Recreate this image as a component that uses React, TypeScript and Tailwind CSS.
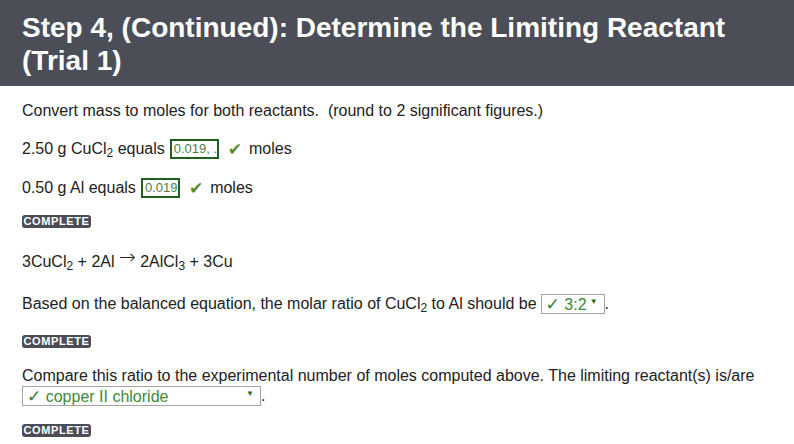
export default function App() {
  return (
    <div className="w-[794px] h-[444px] overflow-hidden bg-white font-['Liberation_Sans',Arial,sans-serif] text-[#222]">
      <div className="bg-[#4b4e57] h-[86px] px-[22px] pt-[11px] border-b border-[#53565e]">
        <h1 className="text-[28px] leading-[33px] font-bold text-white">
          Step 4, (Continued): Determine the Limiting Reactant (Trial 1)
        </h1>
      </div>

      <div className="px-[22px] text-[16px]">
        <p className="mt-[15px] leading-[20px]">
          Convert mass to moles for both reactants.&nbsp; (round to 2 significant figures.)
        </p>

        <div className="mt-[17px] h-[22px] flex items-center">
          <span>
            2.50 g CuCl<sub>2</sub> equals
          </span>
          <span className="ml-[5px] h-[20px] w-[49px] border-2 border-[#1f5f1f] flex items-center pl-[2px] text-[13px] text-[#4d7d4d] whitespace-nowrap overflow-hidden">
            0.019, .
          </span>
          <Check />
          <span className="ml-[7px]">moles</span>
        </div>

        <div className="mt-[17px] h-[22px] flex items-center">
          <span>0.50 g Al equals</span>
          <span className="ml-[5px] h-[20px] w-[39px] border-2 border-[#1f5f1f] flex items-center pl-[2px] text-[13px] text-[#4d7d4d] whitespace-nowrap overflow-hidden">
            0.019
          </span>
          <Check />
          <span className="ml-[7px]">moles</span>
        </div>

        <Badge className="mt-[16px]" />

        <div className="mt-[24px] h-[20px] flex items-center">
          <span>
            3CuCl<sub>2</sub> + 2Al{" "}
            <span className="relative -top-[3px] text-[20px] leading-none font-['DejaVu_Sans',sans-serif] font-light">→</span>{" "}
            2AlCl<sub>3</sub> + 3Cu
          </span>
        </div>

        <div className="mt-[22px] h-[20px] flex items-center">
          <span>
            Based on the balanced equation, the molar ratio of CuCl<sub>2</sub> to Al should be
          </span>
          <Select className="ml-[4px] w-[64px]" label="3:2" />
          <span>.</span>
        </div>

        <Badge className="mt-[21px]" />

        <p className="mt-[18px] leading-[20px]">
          Compare this ratio to the experimental number of moles computed above. The limiting reactant(s) is/are
        </p>
        <div className="-mt-[2px] flex items-center">
          <Select className="w-[239px]" label="copper II chloride" />
          <span>.</span>
        </div>

        <Badge className="mt-[16px]" />
      </div>
    </div>
  );
}

function Check() {
  return (
    <span className="ml-[9px] text-[17px] leading-none text-[#5b8a2b] font-['DejaVu_Sans',sans-serif]">
      ✔
    </span>
  );
}

function Badge({ className }: { className?: string }) {
  return (
    <div
      className={`${className} w-[69px] h-[13px] rounded-[3px] bg-[#4b4e57] text-white text-[11px] leading-[13px] font-bold tracking-[0.6px] flex items-center justify-center`}
    >
      COMPLETE
    </div>
  );
}

function Select({ className, label }: { className?: string; label: string }) {
  return (
    <span
      className={`${className} h-[20px] border border-[#a6a6a6] flex items-center justify-between pl-[4px] pr-[6px] text-[16px] text-[#3a8a3a]`}
    >
      <span className="leading-none whitespace-nowrap">
        <span className="font-['DejaVu_Sans',sans-serif] text-[17px] font-bold text-[#2f7f2f]">✓</span> {label}
      </span>
      <span className="text-[8px] text-[#1f6f1f] -mt-[5px]">▼</span>
    </span>
  );
}
